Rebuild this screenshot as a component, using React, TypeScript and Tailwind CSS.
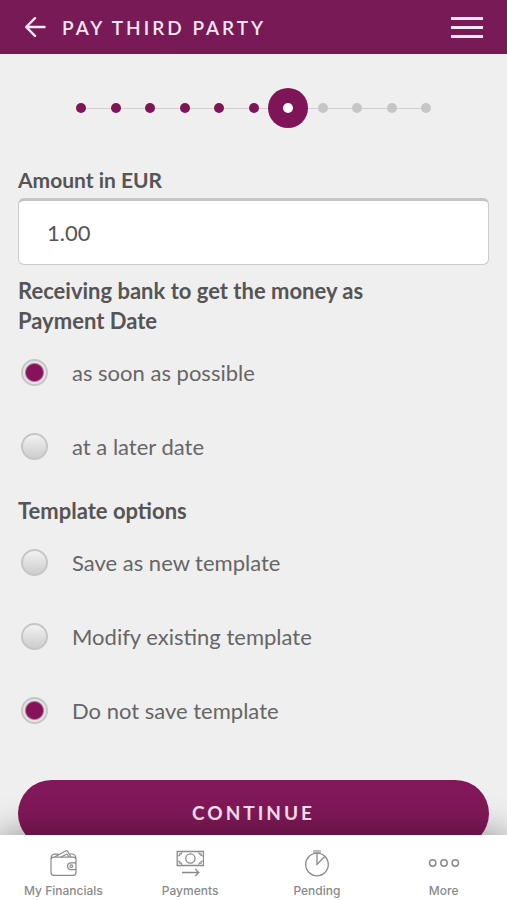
import { useState } from 'react';
import type { ReactNode } from 'react';

const TOTAL_STEPS = 11;
const CURRENT_STEP = 6;

type Option = {
    value: string;
    label: string;
}

const dateOptions: Option[] = [
    { value: 'asap', label: 'as soon as possible' },
    { value: 'later', label: 'at a later date' },
];

const templateOptions: Option[] = [
    { value: 'new', label: 'Save as new template' },
    { value: 'modify', label: 'Modify existing template' },
    { value: 'none', label: 'Do not save template' },
];

function WalletIcon() {
    return (
        <svg viewBox="0 0 28 28" className="size-7" fill="none" stroke="currentColor" strokeWidth="1.2" strokeLinejoin="round">
            <path d="M5 8.200C3 8.200 2 9 2 10.500V23.500C2 25.300 3 26.300 4.800 26.300H24.200C26 26.300 27 25.300 27 23.500V10.500C27 8.900 26 8.200 24.200 8.200Z" />
            <path d="M2.100 10C2.100 6.500 3.500 5.300 5.500 5.200L9.500 5M5.500 8L17 1.800C17.700 1.500 18.200 1.700 18.600 2.300L22 8M12 8L18 5L20 8M20.200 5H23C25.600 5 26.900 6.500 26.900 10" />
            <path d="M27 13.800H22.200C20 13.800 18.600 15.300 18.600 17.200S20 20.600 22.200 20.600H27" />
            <circle cx="22.300" cy="17.200" r="1.300" />
        </svg>
    );
}

function PaymentsIcon() {
    return (
        <svg viewBox="0 0 28 28" className="size-7" fill="none" stroke="currentColor" strokeWidth="1.300">
            <path d="M1.200 2.500H27.500V16.500H1.200Z" />
            <circle cx="14.400" cy="9.500" r="4.600" />
            <path d="M3.300 7V4.700H6M22.700 4.700H25.400V7M3.300 12V14.300H6M22.700 14.300H25.400V12M1.400 7C4 7 6 5.300 6 2.800M27.300 7C24.700 7 22.700 5.300 22.700 2.800M1.400 12C4 12 6 13.700 6 16.200M27.300 12C24.700 12 22.700 13.700 22.700 16.200" strokeWidth=".9" />
            <path d="M6 23.500H22.800M19.200 20L22.800 23.500L19.200 27" />
        </svg>
    );
}

function PendingIcon() {
    return (
        <svg viewBox="0 0 28 28" className="size-7" fill="none" stroke="currentColor" strokeWidth="1.300">
            <circle cx="14" cy="15.500" r="11.300" />
            <path d="M14 4V15.500L21.500 7.800" />
            <path d="M10.500 1.500H17.500V3.500H10.500Z" fill="currentColor" fillOpacity=".5" strokeWidth=".5" />
        </svg>
    );
}

function MoreIcon() {
    return (
        <svg viewBox="0 0 32 28" className="h-7 w-8" fill="none" stroke="currentColor" strokeWidth="1.500">
            <circle cx="4.700" cy="14" r="3.200" />
            <circle cx="16" cy="14" r="3.200" />
            <circle cx="27.300" cy="14" r="3.200" />
        </svg>
    );
}

function Header() {
    return (
        <header className="flex h-[54px] shrink-0 items-center justify-between bg-[#781a55] px-6 text-[#fbe6f3]">
            <div className="flex items-center gap-4">
                <button type="button" aria-label="Back">
                    <svg viewBox="0 0 22 20" className="h-5 w-[22px]" fill="none" stroke="currentColor" strokeWidth="2.400" strokeLinecap="round" strokeLinejoin="round">
                        <path d="M20.500 10H2.500M11 1.200L2.200 10L11 18.800" />
                    </svg>
                </button>
                <h1 className="pt-[2px] text-[19px] leading-6 font-semibold tracking-[3px]">PAY THIRD PARTY</h1>
            </div>
            <button type="button" aria-label="Menu" className="flex w-8 flex-col gap-[6px]">
                <span className="h-[3px] w-full bg-current" />
                <span className="h-[3px] w-full bg-current" />
                <span className="h-[3px] w-full bg-current" />
            </button>
        </header>
    );
}

function StepDot({ index }: { index: number }) {
    if (index === CURRENT_STEP) {
        return (
            <span aria-current="step" className="z-10 -m-[15px] flex size-10 items-center justify-center rounded-full bg-[#7f1557]">
                <span className="size-[10px] rounded-full bg-white" />
            </span>
        );
    }
    return <span className={`size-[10px] rounded-full ${index < CURRENT_STEP ? 'bg-[#7f1557]' : 'bg-[#c6c6c6]'}`} />;
}

function Stepper() {
    return (
        <ol className="flex h-[108px] items-center px-[58px]">
            {Array.from({ length: TOTAL_STEPS }, (_, i) => (
                <li key={i} className={`flex items-center ${i > 0 ? 'flex-1' : ''}`}>
                    {i > 0 && <span className="h-px flex-1 bg-[#cfcfcf]" />}
                    <StepDot index={i} />
                </li>
            ))}
        </ol>
    );
}

type RadioGroupProps = {
    name: string;
    legend: string;
    options: Option[];
    value: string;
    onChange: (value: string) => void;
}

function RadioGroup({ name, legend, options, value, onChange }: RadioGroupProps) {
    return (
        <fieldset>
            <legend className="max-w-[380px] text-[22px] leading-[30px] font-bold">{legend}</legend>
            <div className="flex flex-col gap-[34px] pt-4 pb-[30px]">
                {options.map(option => (
                    <label key={option.value} className="flex h-10 items-center gap-6 pl-[3px] text-[22px] text-[#666]">
                        <input
                            type="radio"
                            name={name}
                            value={option.value}
                            checked={value === option.value}
                            onChange={() => onChange(option.value)}
                            className="size-[27px] appearance-none rounded-full border-2 border-[#c6c6c8] bg-linear-to-b from-[#f2f2f2] to-[#cdcdcd] checked:bg-[radial-gradient(circle,#861259_8px,#e4e2e5_10px)]"
                        />
                        {option.label}
                    </label>
                ))}
            </div>
        </fieldset>
    );
}

function TabLink({ label, children }: { label: string; children: ReactNode }) {
    return (
        <a href="#" className="flex flex-1 flex-col items-center gap-[6px] pt-[14px] text-[#8a8a8a]">
            {children}
            <span className="font-['Inter',sans-serif] text-xs leading-4 font-medium">{label}</span>
        </a>
    );
}

export default function App() {
    const [amount, setAmount] = useState('1.00');
    const [paymentDate, setPaymentDate] = useState('asap');
    const [template, setTemplate] = useState('none');

    return (
        <div className="flex h-screen flex-col bg-[#efefef] font-['Lato',sans-serif] text-[#555]">
            <Header />

            <main className="min-h-0 flex-1 overflow-y-auto px-[18px] [scrollbar-width:none]">
                <Stepper />
                <form onSubmit={e => e.preventDefault()}>
                    <label htmlFor="amount" className="block pt-1 pb-1 text-[21px] leading-7 font-bold">Amount in EUR</label>
                    <input
                        id="amount"
                        type="text"
                        inputMode="decimal"
                        value={amount}
                        onChange={e => setAmount(e.target.value)}
                        className="mb-[11px] block h-[67px] w-full rounded-md border border-t-[3px] border-[#ccc] border-t-[#c4c4c4] bg-white px-7 text-[22px]"
                    />
                    <RadioGroup
                        name="paymentDate"
                        legend="Receiving bank to get the money as Payment Date"
                        options={dateOptions}
                        value={paymentDate}
                        onChange={setPaymentDate}
                    />
                    <RadioGroup
                        name="template"
                        legend="Template options"
                        options={templateOptions}
                        value={template}
                        onChange={setTemplate}
                    />
                    <button
                        type="submit"
                        className="mt-5 h-[67px] w-full rounded-full bg-[#821859] text-[19px] font-bold tracking-[3px] text-[#fbe6f3]"
                    >
                        CONTINUE
                    </button>
                </form>
            </main>

            <nav className="relative flex h-[65px] shrink-0 bg-white shadow-[0_0_36px_rgba(0,0,0,0.45)]">
                <TabLink label="My Financials"><WalletIcon /></TabLink>
                <TabLink label="Payments"><PaymentsIcon /></TabLink>
                <TabLink label="Pending"><PendingIcon /></TabLink>
                <TabLink label="More"><MoreIcon /></TabLink>
            </nav>
        </div>
    );
}
